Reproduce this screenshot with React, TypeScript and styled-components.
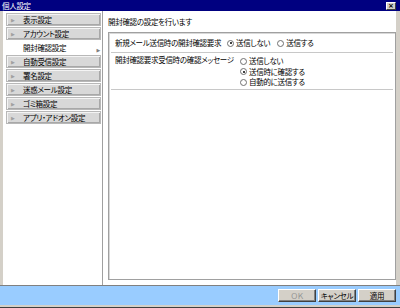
import React from "react";
import styled, { createGlobalStyle } from "styled-components";

const Global = createGlobalStyle`
  html, body { margin: 0; padding: 0; background: #d4d0c8; }
  body {
    font-family: "Noto Sans CJK JP", "Noto Sans", sans-serif;
    font-size: 7.5px;
    letter-spacing: -0.3px;
    font-feature-settings: "palt";
    color: #000;
  }
`;

const Window = styled.div`
  width: 400px;
  height: 308px;
  box-sizing: border-box;
  display: flex;
  flex-direction: column;
  background: #d4d0c8;
  padding: 0 4px 2px 3px;
  border-bottom: 1px solid #404040;
`;

const TitleBar = styled.div`
  height: 11px;
  margin: 0 -4px 0 -3px;
  padding: 0 4px 0 2px;
  background: #000080;
  color: #fff;
  display: flex;
  align-items: center;
  justify-content: space-between;
  line-height: 11px;
`;

const CloseBtn = styled.div`
  width: 10px;
  height: 8px;
  box-sizing: border-box;
  background: #d4d0c8;
  border: 1px solid;
  border-color: #fff #404040 #404040 #fff;
  color: #000;
  font-family: "DejaVu Sans", sans-serif;
  font-size: 7px;
  line-height: 6px;
  text-align: center;
  font-weight: bold;
  letter-spacing: 0;
`;

const Body = styled.div`
  flex: 1;
  display: flex;
  background: #fff;
  min-height: 0;
`;

const Nav = styled.div`
  width: 96px;
  border-right: 1px solid #a0a0a0;
  display: flex;
  flex-direction: column;
  gap: 1px;
  padding: 2px 0 0 3px;
`;

const NavItem = styled.div<{ $active?: boolean }>`
  height: 13px;
  box-sizing: border-box;
  display: flex;
  align-items: center;
  position: relative;
  padding-left: 4px;
  margin-right: ${(p) => (p.$active ? "0" : "1px")};
  background: ${(p) => (p.$active ? "#fff" : "#d8d8d8")};
  border: 1px solid ${(p) => (p.$active ? "transparent" : "#b8b8b8")};
  box-shadow: ${(p) => (p.$active ? "none" : "inset 1px 1px #f4f4f4, inset -1px -1px #a8a8a8")};
  line-height: 10px;
  white-space: nowrap;
`;

const Bullet = styled.span<{ $hidden?: boolean }>`
  color: #a0a0a0;
  font-size: 5px;
  width: 12px;
  visibility: ${(p) => (p.$hidden ? "hidden" : "visible")};
  font-family: "DejaVu Sans", sans-serif;
`;

const ActiveArrow = styled.span`
  position: absolute;
  right: 1px;
  top: 3px;
  color: #808080;
  font-size: 5px;
  font-family: "DejaVu Sans", sans-serif;
`;

const Main = styled.div`
  flex: 1;
  display: flex;
  flex-direction: column;
  padding: 4px 0 5px 5px;
`;

const Heading = styled.div`
  height: 16px;
  line-height: 14px;
  margin-bottom: 1px;
`;

const Panel = styled.div`
  flex: 1;
  border: 1px solid #a0a0a0;
  box-shadow: inset 1px 1px #d8d8d8;
  display: flex;
  flex-direction: column;
  padding: 1px 2px 0 2px;
`;

const Row = styled.div<{ $h: number }>`
  min-height: ${(p) => p.$h}px;
  border-bottom: 1px solid #c8c8c8;
  display: flex;
  align-items: flex-start;
  padding-left: 4px;
`;

const Label = styled.div<{ $w: number; $top: number }>`
  width: ${(p) => p.$w}px;
  flex-shrink: 0;
  padding-top: ${(p) => p.$top}px;
  white-space: nowrap;
  line-height: 10px;
`;

const Options = styled.div<{ $dir: "row" | "column"; $top: number }>`
  display: flex;
  flex-direction: ${(p) => p.$dir};
  gap: ${(p) => (p.$dir === "row" ? "7px" : "0")};
  padding-top: ${(p) => p.$top}px;
`;

const Option = styled.label`
  display: flex;
  align-items: center;
  height: 10.5px;
  line-height: 10px;
  white-space: nowrap;
`;

const Radio = styled.span<{ $on?: boolean }>`
  width: 7px;
  height: 7px;
  box-sizing: border-box;
  border-radius: 50%;
  border: 1px solid #707070;
  background: #fff;
  margin-right: 2px;
  position: relative;
  &::after {
    content: "";
    display: ${(p) => (p.$on ? "block" : "none")};
    position: absolute;
    left: 1.5px;
    top: 1.5px;
    width: 2px;
    height: 2px;
    border-radius: 50%;
    background: #000;
  }
`;

const Footer = styled.div`
  height: 19px;
  margin: 0 -4px 0 -3px;
  padding: 0 4px 0 3px;
  border-top: 1px solid #808080;
  background: #99ccff;
  display: flex;
  justify-content: flex-end;
  align-items: center;
  gap: 2px;
`;

const Button = styled.div<{ $disabled?: boolean }>`
  width: 38px;
  height: 13px;
  box-sizing: border-box;
  background: #d4d0c8;
  border: 1px solid;
  border-color: #fff #404040 #404040 #fff;
  box-shadow: inset -1px -1px #808080;
  color: ${(p) => (p.$disabled ? "#909090" : "#000")};
  text-align: center;
  line-height: 11px;
  white-space: nowrap;
`;

const navItems = [
  "表示設定",
  "アカウント設定",
  "開封確認設定",
  "自動受信設定",
  "署名設定",
  "迷惑メール設定",
  "ゴミ箱設定",
  "アプリ・アドオン設定",
];

export default function App() {
  return (
    <>
      <Global />
      <Window>
        <TitleBar>
          <span>個人設定</span>
          <CloseBtn>×</CloseBtn>
        </TitleBar>
        <Body>
          <Nav>
            {navItems.map((n, i) => (
              <NavItem key={n} $active={i === 2}>
                <Bullet $hidden={i === 2}>▶</Bullet>
                {n}
                {i === 2 && <ActiveArrow>▶</ActiveArrow>}
              </NavItem>
            ))}
          </Nav>
          <Main>
            <Heading>開封確認の設定を行います</Heading>
            <Panel>
              <Row $h={18}>
                <Label $w={112} $top={4}>新規メール送信時の開封確認要求</Label>
                <Options $dir="row" $top={4}>
                  <Option><Radio $on />送信しない</Option>
                  <Option><Radio />送信する</Option>
                </Options>
              </Row>
              <Row $h={36}>
                <Label $w={125} $top={2}>開封確認要求受信時の確認メッセージ</Label>
                <Options $dir="column" $top={3}>
                  <Option><Radio />送信しない</Option>
                  <Option><Radio $on />送信時に確認する</Option>
                  <Option><Radio />自動的に送信する</Option>
                </Options>
              </Row>
            </Panel>
          </Main>
        </Body>
        <Footer>
          <Button $disabled>ＯＫ</Button>
          <Button>キャンセル</Button>
          <Button>適用</Button>
        </Footer>
      </Window>
    </>
  );
}
